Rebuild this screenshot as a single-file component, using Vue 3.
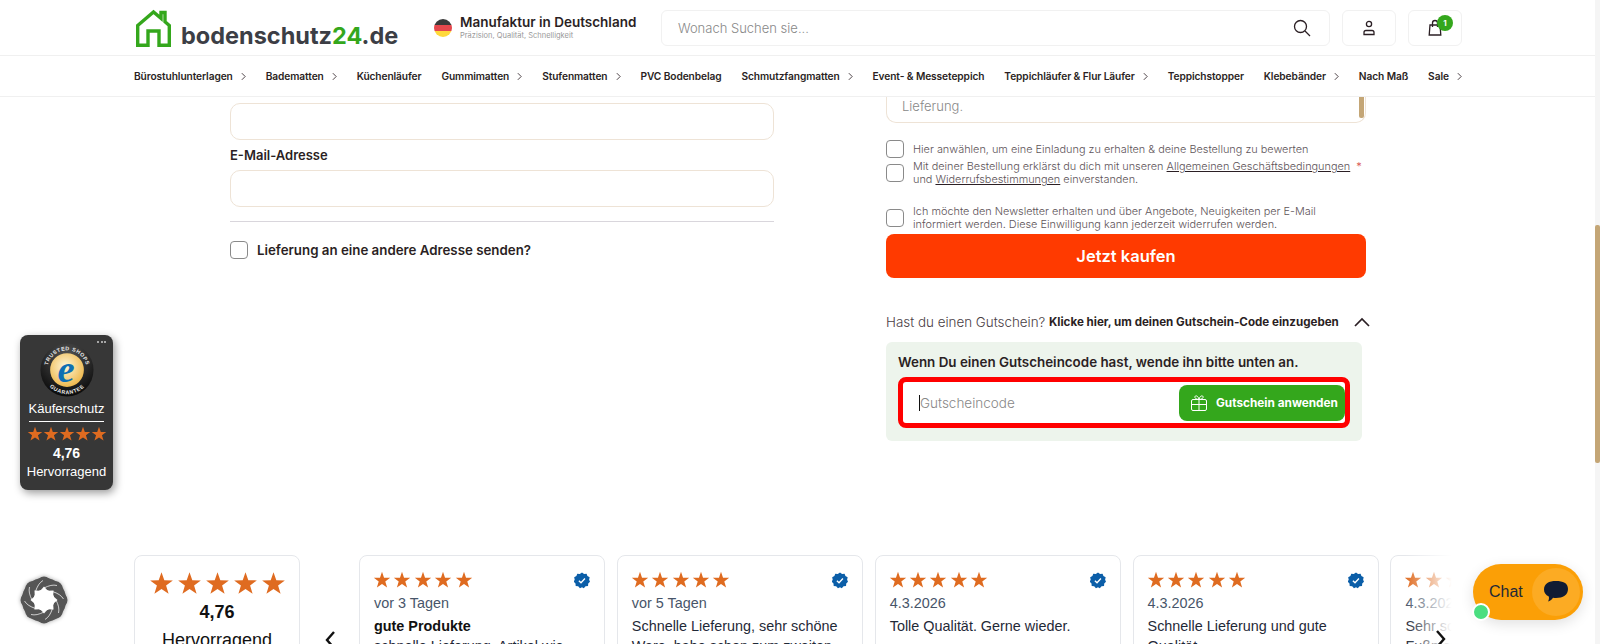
<script setup>
const nav = [
  { t: 'Bürostuhlunterlagen', c: true }, { t: 'Badematten', c: true }, { t: 'Küchenläufer' },
  { t: 'Gummimatten', c: true }, { t: 'Stufenmatten', c: true }, { t: 'PVC Bodenbelag' },
  { t: 'Schmutzfangmatten', c: true }, { t: 'Event- & Messeteppich' }, { t: 'Teppichläufer & Flur Läufer', c: true },
  { t: 'Teppichstopper' }, { t: 'Klebebänder', c: true }, { t: 'Nach Maß' }, { t: 'Sale', c: true }
]
const reviews = [
  { d: 'vor 3 Tagen', h: 'gute Produkte', b: 'schnelle Lieferung, Artikel wie' },
  { d: 'vor 5 Tagen', b: 'Schnelle Lieferung, sehr schöne Ware, habe schon zum zweiten' },
  { d: '4.3.2026', b: 'Tolle Qualität. Gerne wieder.' },
  { d: '4.3.2026', b: 'Schnelle Lieferung und gute Qualität' },
  { d: '4.3.2026', b: 'Sehr schöne und stabile Fußmatte' }
]
const star = '12,1.1 14.7,8.9 22.9,9 16.4,14 18.8,21.900 12,17.200 5.2,21.900 7.600,14 1.100,9 9.300,8.900'
const petals = [0, 45, 90, 135, 180, 225, 270, 315]
</script>

<template>
  <div class="page">
    <header class="top">
      <svg class="house" viewBox="0 0 38 38" fill="none" stroke="#34a71c" stroke-width="3.4">
        <path d="M3.700 36.300V16.500L19.500 3 27 9.400V3.500h4V12.800L35.300 16.500V36.300H25V22H14V36.300Z" />
      </svg>
      <div class="logo">bodenschutz<span class="g">24</span>.de</div>
      <svg class="flag" viewBox="0 0 18 18">
        <clipPath id="fc"><circle cx="9" cy="9" r="9" /></clipPath>
        <g clip-path="url(#fc)">
          <rect width="18" height="6" fill="#3a3a3a" />
          <rect y="6" width="18" height="6" fill="#e5484d" />
          <rect y="12" width="18" height="6" fill="#ffd93b" />
        </g>
      </svg>
      <div class="claim">
        <div class="claim-t">Manufaktur in Deutschland</div>
        <div class="claim-s">Präzision, Qualität, Schnelligkeit</div>
      </div>
      <div class="search">
        <span class="ph">Wonach Suchen sie...</span>
        <svg class="ic" viewBox="0 0 18 18" fill="none" stroke="#2b1f24" stroke-width="1.3">
          <circle cx="7.500" cy="7.500" r="6" /><path d="M12 12l5 5" />
        </svg>
      </div>
      <div class="tbtn">
        <svg class="ic" viewBox="0 0 18 18" fill="none" stroke="#2b1f24" stroke-width="1.3">
          <circle cx="9" cy="5" r="2.600" /><path d="M4 15.500v-2c0-1 .8-2 2-2h6c1.200 0 2 1 2 2v2Z" />
        </svg>
      </div>
      <div class="tbtn cart">
        <svg class="ic" viewBox="0 0 18 18" fill="none" stroke="#2b1f24" stroke-width="1.3">
          <path d="M4 6h10l.800 10H3.200Z" /><path d="M6.500 8V4a2.500 2.500 0 015 0v4" />
        </svg>
        <span class="badge">1</span>
      </div>
    </header>

    <nav class="nav">
      <a v-for="n in nav" :key="n.t" class="nav-i">
        {{ n.t }}
        <svg v-if="n.c" class="nav-c" viewBox="0 0 6 10" fill="none" stroke="#2b1f24" stroke-width="1"><path d="M1 1l4 4-4 4" /></svg>
      </a>
    </nav>

    <main class="main">
      <section class="left">
        <div class="field"></div>
        <label class="lab">E-Mail-Adresse</label>
        <div class="field"></div>
        <hr class="div" />
        <div class="ship"><span class="cb"></span><span>Lieferung an eine andere Adresse senden?</span></div>
      </section>

      <section class="right">
        <div class="area">
          <span>Lieferung.</span>
          <i class="thumb"></i>
        </div>
        <div class="chk r1"><span class="cb"></span><p>Hier anwählen, um eine Einladung zu erhalten &amp; deine Bestellung zu bewerten</p></div>
        <div class="chk r2"><span class="cb"></span><p>Mit deiner Bestellung erklärst du dich mit unseren <u>Allgemeinen Geschäftsbedingungen</u> <em>*</em><br />und <u>Widerrufsbestimmungen</u> einverstanden.</p></div>
        <div class="chk r3"><span class="cb"></span><p>Ich möchte den Newsletter erhalten und über Angebote, Neuigkeiten per E-Mail<br />informiert werden. Diese Einwilligung kann jederzeit widerrufen werden.</p></div>
        <button class="buy">Jetzt kaufen</button>
        <div class="cq">
          <span class="cq-a">Hast du einen Gutschein?</span>
          <b class="cq-b">Klicke hier, um deinen Gutschein-Code einzugeben</b>
          <svg class="cq-c" viewBox="0 0 16 10" fill="none" stroke="#2b1f24" stroke-width="1.7"><path d="M1 9l7-7 7 7" /></svg>
        </div>
        <div class="cbox">
          <div class="cbox-t">Wenn Du einen Gutscheincode hast, wende ihn bitte unten an.</div>
          <div class="cin">
            <span class="caret"></span><span class="cph">Gutscheincode</span>
            <button class="apply">
              <svg class="gift" viewBox="0 0 18 18" fill="none" stroke="#fff" stroke-width="1">
                <rect x="1.500" y="5.500" width="15" height="11" rx="1.500" /><path d="M1.500 10.500h15M9 5.500v11M9 5.500C6 5.500 4.500 4 5 2.500S8.500 2 9 5.500c.5-3.500 3.500-4.500 4-3s-1 3-4 3Z" />
              </svg>
              Gutschein anwenden
            </button>
          </div>
        </div>
      </section>
    </main>

    <section class="revs">
      <div class="sum">
        <div class="sum-st">
          <svg v-for="i in 5" :key="i" class="st-l" viewBox="0 0 24 24"><polygon :points="star" /></svg>
        </div>
        <div class="sum-n">4,76</div>
        <div class="sum-t">Hervorragend</div>
      </div>
      <div class="gap-ar">
        <svg class="ar" viewBox="0 0 12 20" fill="none" stroke="#111" stroke-width="2.4"><path d="M10 2L3 10l7 8" /></svg>
      </div>
      <article v-for="(r, k) in reviews" :key="k" class="card">
        <div class="card-top">
          <svg v-for="i in 5" :key="i" class="st" viewBox="0 0 24 24"><polygon :points="star" /></svg>
          <svg class="ver" viewBox="0 0 18 18">
            <path fill="#0b5ea8" d="M9 0l2.300 1.700 2.800-.3 1 2.600 2.500 1.300-.6 2.800L18 10.300l-2 2-.2 2.800-2.800.4L11 17.700 9 16.500l-2.300 1.200-2-2.200-2.800-.4-.2-2.800-2-2 1.100-2.200-.6-2.800 2.500-1.300 1-2.600 2.800.3Z" />
            <path fill="none" stroke="#fff" stroke-width="1.500" d="M5.500 9.200l2.400 2.400 4.400-4.800" />
          </svg>
        </div>
        <div class="card-d">{{ r.d }}</div>
        <div v-if="r.h" class="card-h">{{ r.h }}</div>
        <div class="card-b">{{ r.b }}</div>
      </article>
      <div class="fade"></div>
      <svg class="ar ar-r" viewBox="0 0 12 20" fill="none" stroke="#111" stroke-width="2.4"><path d="M2 2l7 8-7 8" /></svg>
    </section>

    <aside class="ts">
      <span class="ts-dots"><i></i><i></i><i></i></span>
      <svg class="seal" viewBox="0 0 56 56">
        <defs>
          <radialGradient id="gold" cx="45%" cy="40%" r="60%"><stop offset="0" stop-color="#fff6d8" /><stop offset="1" stop-color="#eeb94f" /></radialGradient>
          <radialGradient id="rim" cx="50%" cy="25%" r="75%"><stop offset="0" stop-color="#555" /><stop offset="1" stop-color="#0a0a0a" /></radialGradient>
          <path id="arcT" d="M7.500 28a20.500 20.500 0 0141 0" />
          <path id="arcB" d="M3 28a25 25 0 0050 0" />
        </defs>
        <circle cx="28" cy="28" r="27.500" fill="url(#rim)" />
        <circle cx="28" cy="28" r="17.500" fill="url(#gold)" />
        <text class="seal-t"><textPath href="#arcT" startOffset="50%" text-anchor="middle">TRUSTED SHOPS</textPath></text>
        <text class="seal-t"><textPath href="#arcB" startOffset="50%" text-anchor="middle">GUARANTEE</textPath></text>
        <text x="27" y="40" class="seal-e" text-anchor="middle">e</text>
      </svg>
      <div class="ts-k">Käuferschutz</div>
      <div class="ts-l"></div>
      <div class="ts-st"><svg v-for="i in 5" :key="i" class="st-s" viewBox="0 0 24 24"><polygon :points="star" /></svg></div>
      <div class="ts-n">4,76</div>
      <div class="ts-h">Hervorragend</div>
    </aside>

    <svg class="spin" viewBox="0 0 48 48">
      <circle cx="24" cy="24" r="22.300" fill="#555" />
      <g v-for="a in petals" :key="'p' + a" :transform="`rotate(${a} 24 24)`">
        <circle cx="24" cy="7.500" r="7" fill="#555" />
      </g>
      <g v-for="a in petals" :key="'l' + a" :transform="`rotate(${a} 24 24)`">
        <path d="M24 12C29 9.500 33 8.500 37 9.500" fill="none" stroke="#fff" stroke-width=".7" />
        <polygon points="20,15 28,15 24,10.500" fill="#fff" />
      </g>
      <circle cx="24" cy="24" r="10.500" fill="#fff" />
    </svg>

    <div class="chat">
      <span class="chat-t">Chat</span>
      <span class="chat-c">
        <svg viewBox="0 0 26 24" class="chat-i"><path fill="#111c33" d="M13 1c7 0 12 2 12 8 0 6-5 9-12 9-1 0-2 0-3-.2-1.500 2-3 3.500-5 3.800 1-1.600 1.200-3.300.8-5C2.500 15 1 12.500 1 9.500 1 3.500 6 1 13 1Z" /></svg>
      </span>
      <i class="chat-o"></i>
    </div>

    <div class="sb"><i></i></div>
  </div>
</template>

<style>
html, body { margin: 0; background: #fff; overflow: hidden; }
</style>

<style scoped>
.page { position: relative; width: 1600px; height: 644px; overflow: hidden; background: #fff; font-family: Inter, "Noto Sans", sans-serif; color: #2b1f24; }
.top { height: 55px; display: flex; align-items: center; padding-left: 134px; border-bottom: 1px solid #f0f0f0; box-sizing: content-box; }
.house { width: 38px; height: 38px; margin-top: 1px; flex: none; }
.logo { margin-left: 9px; margin-top: 17px; width: 229px; font: 700 23.500px/1 Inter, sans-serif; color: #3c3e45; flex: none; }
.g { color: #34a71c; }
.flag { width: 18px; height: 18px; margin-left: 24px; flex: none; }
.claim { margin-left: 8px; width: 201px; margin-top: 2px; flex: none; }
.claim-t { font-size: 13.500px; font-weight: 600; line-height: 15px; white-space: nowrap; }
.claim-s { font-size: 7.500px; color: #999; line-height: 12px; }
.search { width: 669px; height: 36px; box-sizing: border-box; border: 1px solid #f1f1f1; border-radius: 6px; display: flex; align-items: center; justify-content: space-between; padding: 0 18px 0 16px; flex: none; }
.ph { font-size: 13px; font-weight: 300; color: #888; }
.ic { width: 18px; height: 18px; }
.tbtn { width: 54px; height: 36px; box-sizing: border-box; border: 1px solid #f1f1f1; border-radius: 6px; margin-left: 12px; display: flex; align-items: center; justify-content: center; position: relative; flex: none; }
.badge { position: absolute; left: 28px; top: 4px; width: 16px; height: 16px; border-radius: 50%; background: #34a71c; color: #fff; font-size: 8px; font-weight: 700; display: flex; align-items: center; justify-content: center; }

.nav { height: 40px; display: flex; align-items: center; justify-content: space-between; padding: 0 138px 0 134px; border-bottom: 1px solid #f0f0f0; }
.nav-i { font-size: 10.200px; font-weight: 600; letter-spacing: -.1px; white-space: nowrap; display: flex; align-items: center; }
.nav-c { width: 5px; height: 9px; margin-left: 8px; }

.main { height: 458px; display: flex; }
.left { width: 544px; margin-left: 230px; padding-top: 6px; }
.field { height: 37px; box-sizing: border-box; border: 1px solid #eee3d6; border-radius: 10px; }
.lab { display: block; font-size: 13px; font-weight: 600; line-height: 15px; margin: 8px 0 7px; }
.div { margin: 14px 0 0; border: 0; border-top: 1px solid #d9d6dc; }
.ship { display: flex; align-items: center; gap: 9px; margin-top: 19px; font-size: 13.300px; font-weight: 600; }
.cb { width: 18px; height: 18px; box-sizing: border-box; border: 1px solid #8a8a8a; border-radius: 4px; background: #fff; flex: none; }

.right { width: 480px; margin-left: 112px; }
.area { position: relative; height: 26px; box-sizing: border-box; border: 1px solid #eee3d6; border-top: 0; border-radius: 0 0 10px 10px; padding-left: 15px; font-size: 13px; font-weight: 300; color: #888; line-height: 18px; }
.thumb { position: absolute; right: 1px; top: 0; width: 5px; height: 21px; background: #c4a676; border-radius: 0 0 2px 2px; }
.chk { display: flex; gap: 9px; align-items: center; font-size: 10.900px; line-height: 13px; color: #5d5358; font-weight: 300; }
.chk p { margin: 0; white-space: nowrap; }
.chk u { text-decoration-color: #2b1f24; }
.chk em { color: #d9534f; font-style: normal; margin-left: 3px; }
.r1 { margin-top: 17px; height: 18px; }
.r2 { margin-top: 2px; height: 26px; }
.r3 { margin-top: 19px; height: 26px; }
.buy { display: block; width: 480px; height: 44px; margin-top: 3px; border: 0; border-radius: 8px; background: #ff3a00; color: #fff; font: 600 16.500px Inter, sans-serif; }
.cq { display: flex; align-items: center; margin-top: 34px; height: 20px; }
.cq-a { font-size: 13.400px; font-weight: 300; color: #4a4045; width: 163px; white-space: nowrap; flex: none; }
.cq-b { font-size: 11.600px; font-weight: 700; width: 305px; white-space: nowrap; flex: none; }
.cq-c { width: 16px; height: 10px; flex: none; }
.cbox { width: 476px; height: 99px; box-sizing: border-box; margin-top: 10px; padding: 12px 12px 0; background: #edf4ec; border-radius: 6px; }
.cbox-t { font-size: 13.400px; font-weight: 600; line-height: 16px; white-space: nowrap; }
.cin { position: relative; margin-top: 7px; height: 51px; box-sizing: border-box; border: 5px solid #f00; border-radius: 8px; background: #fff; display: flex; align-items: center; padding-left: 16px; }
.caret { width: 1px; height: 16px; background: #111; }
.cph { font-size: 13.500px; font-weight: 300; color: #888; }
.apply { margin-left: auto; width: 166px; height: 36px; border: 0; border-radius: 8px; background: #34a71c; color: #fff; font: 700 11.800px Inter, sans-serif; display: flex; align-items: center; padding: 0 0 0 11px; gap: 8px; white-space: nowrap; }
.gift { width: 18px; height: 18px; flex: none; }

.revs { position: relative; height: 89px; overflow: hidden; display: flex; padding-left: 134px; font-family: "Liberation Sans", Arial, sans-serif; }
.sum, .card { height: 120px; box-sizing: border-box; border: 1px solid #e5e7eb; border-radius: 8px; flex: none; background: #fff; }
.sum { width: 166px; text-align: center; padding-top: 13px; }
.sum-st { display: flex; justify-content: center; align-items: center; gap: 3px; height: 28px; }
.st-l { width: 25px; height: 25px; fill: #df6b20; }
.sum-n { font-size: 18px; font-weight: 700; color: #111; margin-top: 4px; line-height: 22px; }
.sum-t { font-size: 18px; color: #111; margin-top: 6px; line-height: 22px; }
.gap-ar { width: 59px; flex: none; display: flex; justify-content: center; padding-top: 75px; box-sizing: border-box; }
.ar { width: 12px; height: 20px; flex: none; }
.ar-r { position: absolute; left: 1435px; top: 74px; }
.card { width: 246px; margin-right: 11.850px; padding: 14px 14px 0; }
.card-top { display: flex; align-items: center; gap: 2.400px; height: 20px; margin-left: -1px; }
.st { width: 18px; height: 18px; fill: #df6b20; }
.ver { width: 16px; height: 17px; margin-left: auto; }
.card-d { font-size: 14.400px; color: #475569; line-height: 20px; margin-top: 3px; }
.card-h { font-size: 14.400px; font-weight: 700; color: #111; line-height: 20px; margin-top: 3px; }
.card-b { font-size: 14.400px; color: #1f2937; line-height: 20px; margin-top: 3px; }
.card-h + .card-b { margin-top: 0; }
.fade { position: absolute; left: 1405px; top: 0; width: 55px; height: 100%; background: linear-gradient(to right, rgba(255,255,255,0), #fff 85%); }
.fade::after { content: ""; position: absolute; left: 50px; top: 0; width: 200px; height: 100%; background: #fff; }

.ts { position: absolute; left: 20px; top: 335px; width: 93px; height: 155px; box-sizing: border-box; background: #373737; border-radius: 8px; box-shadow: 2px 3px 8px rgba(0,0,0,.4); color: #fff; font-family: "Liberation Sans", Arial, sans-serif; text-align: center; padding-top: 8px; }
.ts-dots { position: absolute; right: 7px; top: 6px; display: flex; gap: 1.500px; }
.ts-dots i { width: 2px; height: 2px; border-radius: 50%; background: #ccc; }
.seal { width: 54px; height: 54px; display: block; margin: 0 auto; }
.seal-t { font: 700 5.500px "Liberation Sans", sans-serif; fill: #eee; letter-spacing: .6px; }
.seal-e { font: italic 700 40px "Liberation Serif", serif; fill: #0f6fb3; }
.ts-k { font-size: 13px; line-height: 15px; margin-top: 4px; }
.ts-l { height: 1px; background: #fff; margin: 5px 9px 4px; }
.ts-st { display: flex; justify-content: center; }
.st-s { width: 16px; height: 16px; fill: #df6b20; }
.ts-n { font-size: 14px; font-weight: 700; line-height: 18px; margin-top: 2px; }
.ts-h { font-size: 13px; line-height: 18px; margin-top: 1px; }

.spin { position: absolute; left: 20px; top: 576px; width: 48px; height: 48px; filter: drop-shadow(0 0 2px rgba(0,0,0,.35)); }

.chat { position: absolute; left: 1473px; top: 564px; width: 110px; height: 56px; border-radius: 28px; background: #fb9f06; box-shadow: 0 4px 14px rgba(0,0,0,.12); display: flex; align-items: center; font: 16px "Liberation Sans", Arial, sans-serif; color: #1f2937; }
.chat-t { margin-left: 16px; }
.chat-c { position: absolute; right: 3px; top: 4px; width: 48px; height: 48px; border-radius: 50%; background: #fcab23; display: flex; align-items: center; justify-content: center; }
.chat-i { width: 26px; height: 24px; }
.chat-o { position: absolute; left: -1px; top: 39px; width: 14px; height: 14px; border-radius: 50%; background: #4ade80; border: 2px solid #fff; }

.sb { position: absolute; right: 0; top: 0; width: 5px; height: 644px; background: #f5f5f5; }
.sb i { position: absolute; right: 0; top: 225px; width: 5px; height: 238px; background: #c4a676; border-radius: 2px; }
</style>
